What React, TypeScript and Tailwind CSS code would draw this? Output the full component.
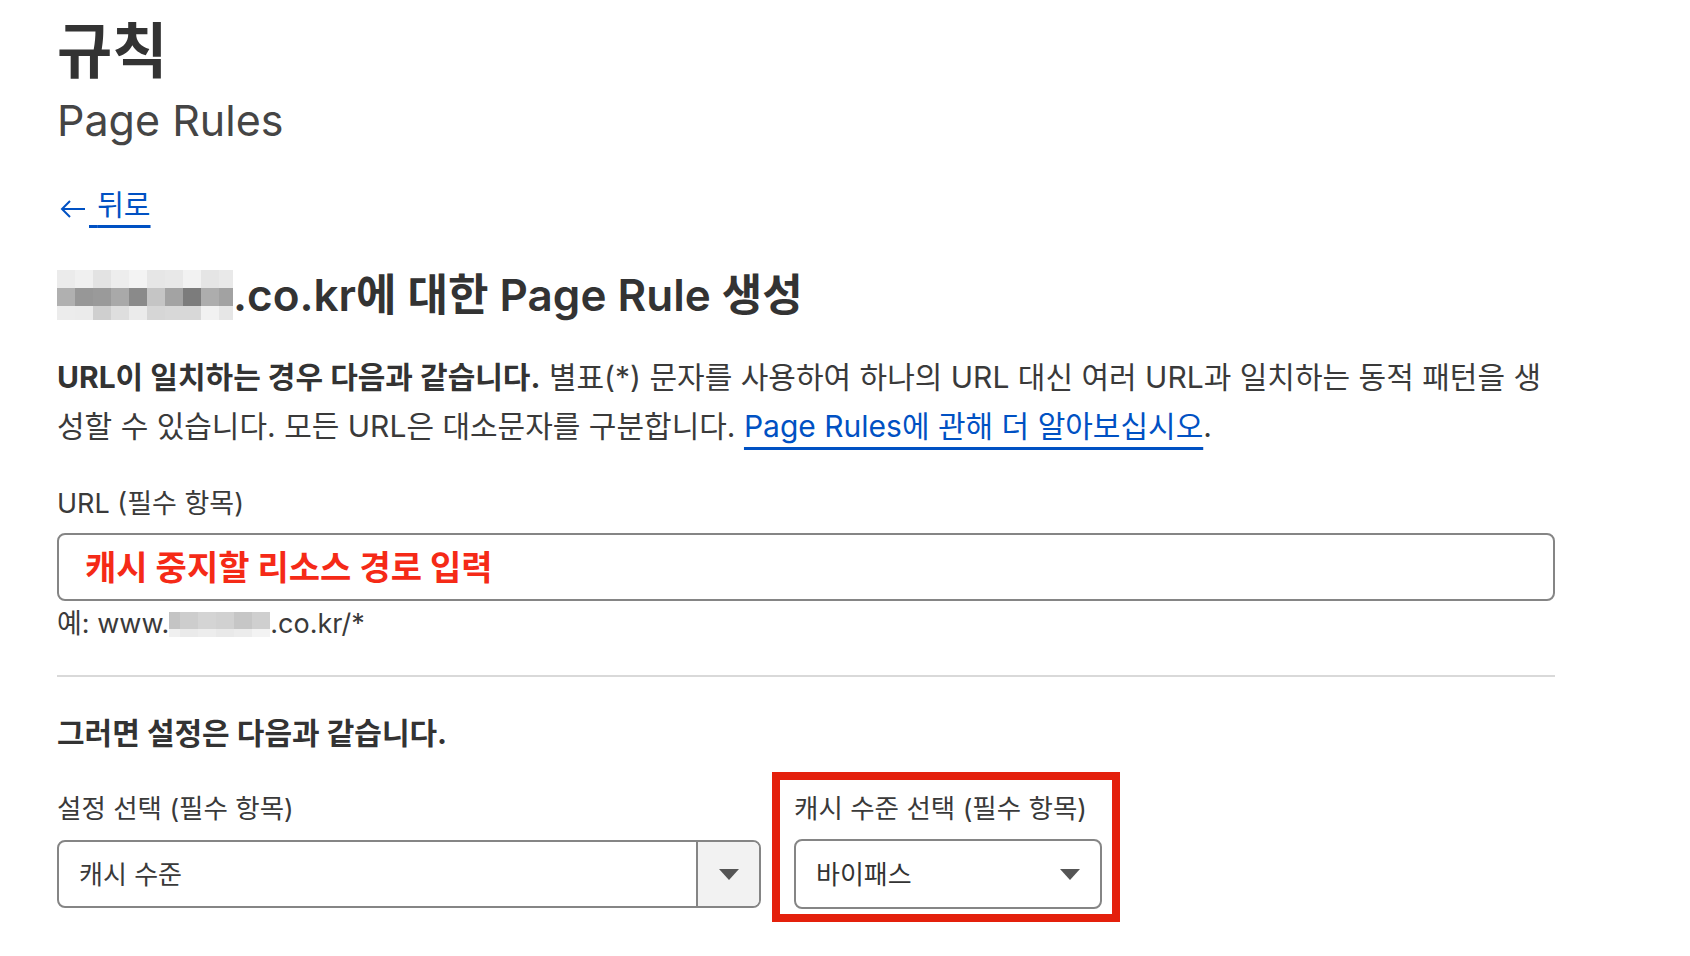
import React from 'react';

const headMosaic = [
  ['#ebebeb', '#f0f0f0', '#e3e3e3', '#ededed', '#f3f3f3', '#e6e6e6', '#e8e8e8', '#f2f2f2', '#e5e5e5', '#e9e9e9'],
  ['#b0b0b0', '#979797', '#9a9a9a', '#a9a9a9', '#8a8a8a', '#c5c5c5', '#a3a3a3', '#7c7c7c', '#adadad', '#a2a2a2'],
  ['#ececec', '#ebebeb', '#cfcfcf', '#dedede', '#ebebeb', '#d6d6d6', '#d8d8d8', '#d8d8d8', '#f1f1f1', '#e6e6e6'],
];

const exampleMosaic = [
  ['#c4c4c4', '#cdcdcd', '#d4d4d4', '#d1d1d1', '#c6c6c6', '#cfcfcf'],
  ['#f0f0f0', '#eaeaea', '#ededed', '#e9e9e9', '#ececec', '#f3f3f3'],
];

// blurred-out domain name, drawn as a block of grey cells
function Mosaic({ rows, cols, heights }: { rows: string[][]; cols: number[]; heights: number[] }) {
  return (
    <span className="inline-flex flex-col align-middle">
      {rows.map((row, r) => (
        <span key={r} className="flex">
          {row.map((c, i) => (
            <span key={i} className="block" style={{ background: c, width: cols[i], height: heights[r] }} />
          ))}
        </span>
      ))}
    </span>
  );
}

function Caret() {
  return (
    <svg width="20" height="11" viewBox="0 0 20 11">
      <path d="M0 0 H20 L10 11 Z" fill="#555" />
    </svg>
  );
}

export default function App() {
  return (
    <div
      className="h-[956px] overflow-hidden bg-white pl-[57px] text-[#333]"
      style={{ fontFamily: "Inter, 'Noto Sans CJK KR', sans-serif" }}
    >
      <div className="w-[1498px]">
        <h1 className="pt-[19px] text-[60px] font-bold leading-[64px] text-[#333]">규칙</h1>
        <p className="mt-[11px] text-[43px] leading-[52px] text-[#454545]">Page Rules</p>

        <a className="mt-[40px] flex h-[40px] items-center text-[29px] leading-[40px] text-[#0051c3]">
          <svg width="26" height="20" viewBox="0 0 26 20" className="ml-[3px] mt-[6px]">
            <path d="M25 10 H2 M10 2 L2 10 L10 18" fill="none" stroke="#0051c3" strokeWidth="2" />
          </svg>
          <span className="ml-[3px] underline decoration-[3px] underline-offset-[9px]">{'\u00a0'}뒤로</span>
        </a>

        <h2 className="mt-[41px] flex h-[56px] items-center text-[44px] font-semibold leading-[56px] text-[#333]">
          <Mosaic rows={headMosaic} cols={[18, 18, 18, 18, 18, 18, 18, 18, 18, 14]} heights={[18, 18, 14]} />
          <span>.co.kr에 대한 Page Rule 생성</span>
        </h2>

        <p className="mt-[30px] text-[30px] leading-[49px] text-[#3a3a3a]">
          <b className="font-bold text-[#333]">URL이 일치하는 경우 다음과 같습니다.</b> 별표(*) 문자를 사용하여 하나의 URL 대신 여러
          URL과 일치하는 동적 패턴을 생
          <br />
          성할 수 있습니다. 모든 URL은 대소문자를 구분합니다.{' '}
          <a className="text-[#0051c3] underline decoration-[3px] underline-offset-[10px]">Page Rules에 관해 더 알아보십시오</a>.
        </p>

        <div className="mt-[35px] text-[27px] leading-[36px] text-[#3a3a3a]">URL (필수 항목)</div>
        <div className="mt-[11px] flex h-[68px] items-center rounded-[8px] border-2 border-[#858585] pl-[26px]">
          <span className="text-[34px] font-bold text-[#f52a17]">캐시 중지할 리소스 경로 입력</span>
        </div>
        <div className="mt-[5px] flex h-[36px] items-center text-[27px] leading-[36px] text-[#3a3a3a]">
          <span>예: www.</span>
          <Mosaic rows={exampleMosaic} cols={[11, 18, 18, 18, 18, 18]} heights={[17, 8]} />
          <span>.co.kr/*</span>
        </div>

        <div className="mt-[33px] h-[2px] bg-[#d9d9d9]" />

        <h3 className="mt-[38px] text-[30px] font-bold leading-[36px] text-[#333]">그러면 설정은 다음과 같습니다.</h3>

        <div className="mt-[21px] flex items-start">
          <div className="w-[704px] pt-[18px]">
            <div className="text-[26.5px] leading-[36px] text-[#3a3a3a]">설정 선택 (필수 항목)</div>
            <div className="mt-[14px] flex h-[68px] overflow-hidden rounded-[8px] border-2 border-[#858585]">
              <div className="flex flex-1 items-center pl-[20px] text-[26px] text-[#3a3a3a]">캐시 수준</div>
              <div className="flex w-[63px] items-center justify-center border-l-2 border-[#858585] bg-[#f2f2f2]">
                <Caret />
              </div>
            </div>
          </div>

          <div className="ml-[11px] w-[348px] border-[8px] border-[#e4200c] pb-[5px] pl-[14px] pr-[10px] pt-[10px]">
            <div className="text-[26.5px] leading-[36px] text-[#3a3a3a]">캐시 수준 선택 (필수 항목)</div>
            <div className="mt-[13px] flex h-[70px] items-center justify-between rounded-[8px] border-2 border-[#858585] pl-[20px] pr-[20px]">
              <span className="text-[26px] text-[#333]">바이패스</span>
              <Caret />
            </div>
          </div>
        </div>
      </div>
    </div>
  );
}
